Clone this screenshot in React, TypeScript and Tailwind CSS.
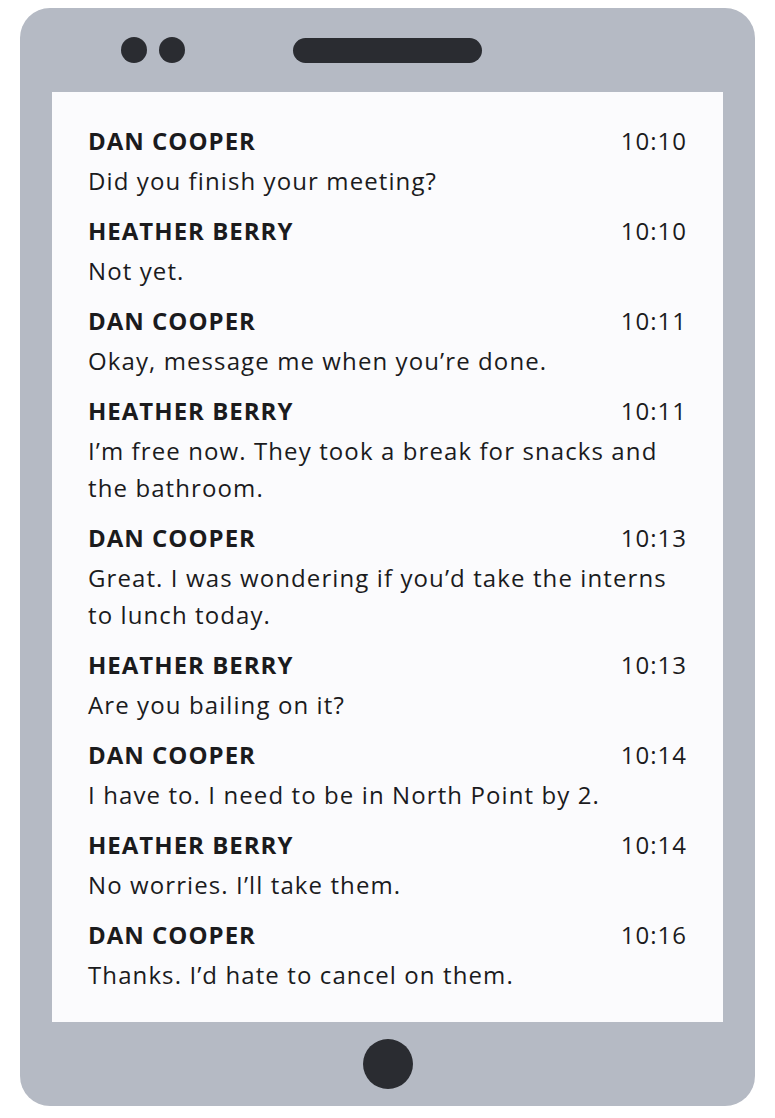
const messages = [
  { name: "DAN COOPER", time: "10:10", text: "Did you finish your meeting?" },
  { name: "HEATHER BERRY", time: "10:10", text: "Not yet." },
  { name: "DAN COOPER", time: "10:11", text: "Okay, message me when you’re done." },
  { name: "HEATHER BERRY", time: "10:11", text: "I’m free now. They took a break for snacks and the bathroom." },
  { name: "DAN COOPER", time: "10:13", text: "Great. I was wondering if you’d take the interns to lunch today." },
  { name: "HEATHER BERRY", time: "10:13", text: "Are you bailing on it?" },
  { name: "DAN COOPER", time: "10:14", text: "I have to. I need to be in North Point by 2." },
  { name: "HEATHER BERRY", time: "10:14", text: "No worries. I’ll take them." },
  { name: "DAN COOPER", time: "10:16", text: "Thanks. I’d hate to cancel on them." },
];

export default function App() {
  return (
    <div className="min-h-[1118px] w-[775px] bg-white pt-2 pl-5 font-['Open_Sans',sans-serif]">
      <div className="flex w-[735px] flex-col rounded-[30px] bg-[#b5bac4]">
        {/* camera + speaker */}
        <div className="grid h-[84px] grid-cols-[1fr_189px_1fr] items-center">
          <div className="flex gap-3 pl-[101px]">
            <span className="h-[26px] w-[26px] rounded-full bg-[#2a2c31]" />
            <span className="h-[26px] w-[26px] rounded-full bg-[#2a2c31]" />
          </div>
          <span className="h-[25px] rounded-full bg-[#2a2c31]" />
          <div />
        </div>

        {/* screen */}
        <div className="mx-8 flex h-[930px] flex-col gap-[13px] bg-[#fbfbfd] px-9 pt-[30px] text-[#1b1b1d]">
          {messages.map((m, i) => (
            <div key={i} className="flex flex-col gap-[3px]">
              <div className="flex items-center justify-between text-[24px] leading-[37px] tracking-[1px]">
                <span className="font-bold">{m.name}</span>
                <span>{m.time}</span>
              </div>
              <p className="text-[24px] leading-[37px] tracking-[1.1px]">{m.text}</p>
            </div>
          ))}
        </div>

        {/* home button */}
        <div className="flex h-[84px] items-center justify-center">
          <span className="h-[50px] w-[50px] rounded-full bg-[#2a2c31]" />
        </div>
      </div>
    </div>
  );
}
